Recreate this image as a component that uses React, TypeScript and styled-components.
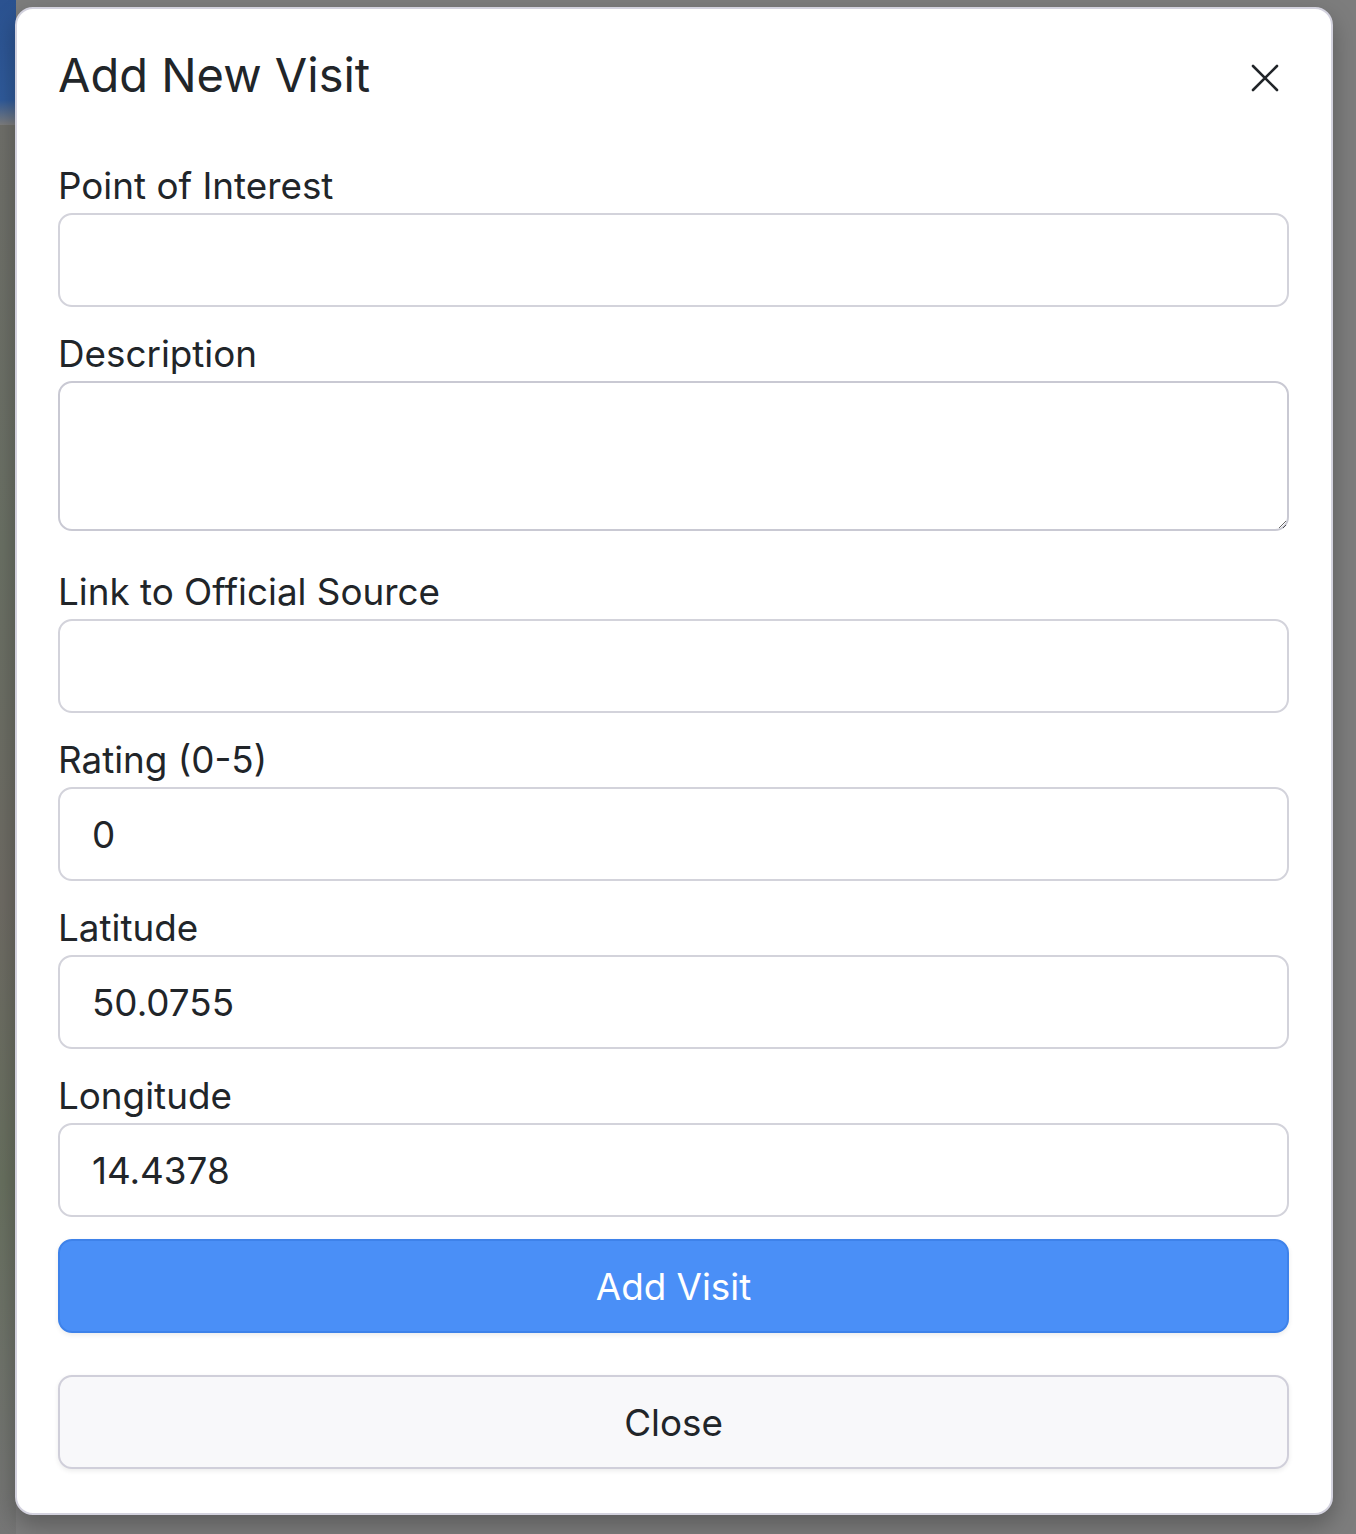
import React from "react";
import styled, { createGlobalStyle } from "styled-components";

const GlobalStyle = createGlobalStyle`
  html, body {
    margin: 0;
    padding: 0;
  }
  body {
    font-family: "Inter", "Noto Sans", sans-serif;
    color: #212529;
    background:
      linear-gradient(180deg, #2b5290 0%, #2f5a9a 80%, rgba(47, 90, 154, 0) 100%) 0 0 / 16px 125px no-repeat,
      linear-gradient(180deg, #6f6f6a 0%, #6a7064 30%, #6e6b64 55%, #68705f 75%, #767676 100%) 0 125px / 16px 1409px no-repeat,
      #7d7d7d;
  }
  * {
    box-sizing: border-box;
  }
`;

const fields = [
  { label: "Point of Interest", value: "" },
  { label: "Description", value: "", multiline: true },
  { label: "Link to Official Source", value: "" },
  { label: "Rating (0-5)", value: "0" },
  { label: "Latitude", value: "50.0755" },
  { label: "Longitude", value: "14.4378" },
];

const App = () => {
  return (
    <>
      <GlobalStyle />
      <Backdrop>
        <Modal>
          <Header>
            <Title>Add New Visit</Title>
            <CloseIcon aria-label="Close">
              <svg width="28" height="28" viewBox="0 0 28 28" fill="none">
                <path
                  d="M2 2 L26 26 M26 2 L2 26"
                  stroke="#212529"
                  strokeWidth="2.6"
                  strokeLinecap="round"
                />
              </svg>
            </CloseIcon>
          </Header>
          <Form>
            {fields.map((f) => (
              <Field key={f.label} $multiline={f.multiline}>
                <Label>{f.label}</Label>
                {f.multiline ? (
                  <TextArea />
                ) : (
                  <Input type="text" defaultValue={f.value} />
                )}
              </Field>
            ))}
            <Button $primary>Add Visit</Button>
            <Button>Close</Button>
          </Form>
        </Modal>
      </Backdrop>
    </>
  );
};

const Backdrop = styled.div`
  min-height: 1534px;
  padding: 7px 23px 21px 15px;
`;

const Modal = styled.div`
  background: #fff;
  border: 2px solid #d3d2de;
  border-radius: 18px;
  padding: 36px 42px 44px 41px;
  box-shadow: 0 10px 24px rgba(0, 0, 0, 0.28);
`;

const Header = styled.div`
  display: flex;
  align-items: flex-start;
  justify-content: space-between;
  margin-bottom: 54px;
`;

const Title = styled.h2`
  margin: 0;
  font-size: 47px;
  font-weight: 400;
  line-height: 60px;
`;

const CloseIcon = styled.button`
  display: flex;
  width: 28px;
  height: 28px;
  margin: 19px 10px 0 0;
  padding: 0;
  border: none;
  background: transparent;
  cursor: pointer;
`;

const Form = styled.div`
  display: flex;
  flex-direction: column;
`;

const Field = styled.div<{ $multiline?: boolean }>`
  display: flex;
  flex-direction: column;
  margin-bottom: ${(p) => (p.$multiline ? "34px" : "20px")};
`;

const Label = styled.label`
  font-size: 36.8px;
  line-height: 54px;
`;

const Input = styled.input`
  height: 94px;
  width: 100%;
  padding: 0 32px;
  border: 2px solid #d3d3db;
  border-radius: 14px;
  font-family: inherit;
  font-size: 36.8px;
  color: #212529;
  background: #fff;
  outline: none;
`;

const TextArea = styled.textarea`
  display: block;
  height: 150px;
  width: 100%;
  padding: 20px 32px;
  border: 2px solid #c9c9d3;
  border-radius: 14px;
  font-family: inherit;
  font-size: 36px;
  resize: vertical;
  outline: none;
`;

const Button = styled.button<{ $primary?: boolean }>`
  height: 94px;
  width: 100%;
  margin-top: ${(p) => (p.$primary ? "2px" : "42px")};
  border-radius: 14px;
  border: 2px solid ${(p) => (p.$primary ? "#3e82ea" : "#d0cfda")};
  background: ${(p) => (p.$primary ? "#4a8ff7" : "#f8f8fa")};
  color: ${(p) => (p.$primary ? "#fff" : "#212529")};
  font-family: inherit;
  font-size: 36.8px;
  box-shadow: 0 2px 5px rgba(0, 0, 0, 0.08);
  cursor: pointer;
`;

export default App;
